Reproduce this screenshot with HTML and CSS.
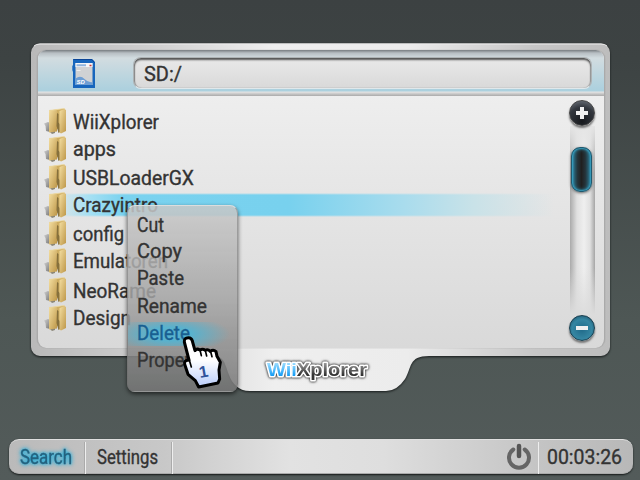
FILE: index.html
```
<!DOCTYPE html>
<html lang="en">
<head>
<meta charset="utf-8">
<title>WiiXplorer</title>
<link rel="stylesheet" href="styles.css">
</head>
<body>
<svg class="defs" width="0" height="0">
  <defs>
    <linearGradient id="gold" x1="0" y1="0" x2="1" y2="1"><stop offset="0" stop-color="#f4deA0"/><stop offset="1" stop-color="#bd9648"/></linearGradient>
    <linearGradient id="steel" x1="0" y1="0" x2="1" y2="1"><stop offset="0" stop-color="#d0d0d0"/><stop offset="1" stop-color="#777"/></linearGradient>
    <symbol id="folder" viewBox="0 0 22 27">
      <path d="M0 15.500l4-1.500 2 1v9l-4-1-.500-5z" fill="url(#steel)"/><path d="M4 22l7-1v4l-3 1z" fill="#8a8678"/>
      <path d="M5 2.500L20.500.500v19L5 23z" fill="#cfae62"/>
      <path d="M5 2.500L13 1.500v22L5 24.500z" fill="url(#gold)"/>
      <path d="M13 5l1.500 1v8.500l1.500 2v7.500l-1.500 1-2-7z" fill="#86703c"/>
      <path d="M15.500 3L20.500 1l1.500 1v21l-5 2.500-1.500-1z" fill="url(#gold)"/>
      <path d="M5 2.500L20.500.500" stroke="#eed9a0" stroke-width=".8"/>
    </symbol>
  </defs>
</svg>
<main class="window">
  <svg class="frame" viewBox="0 0 580 350">
    <defs>
      <linearGradient id="metal" x1="0" y1="0" x2="1" y2="0"><stop offset="0" stop-color="#b9b9b9"/><stop offset=".2" stop-color="#cecece"/><stop offset=".42" stop-color="#efefef"/><stop offset=".65" stop-color="#ececec"/><stop offset=".87" stop-color="#c6c6c6"/><stop offset="1" stop-color="#bdbdbd"/></linearGradient>
    </defs>
    <path d="M9 .5H570a9 9 0 0 1 9 9V304a9 9 0 0 1-9 9H398C377 313 381 325 374 336Q366 348 355 348H219C207 348 201 340 198 332C193 318 193 313 180 313H9a9 9 0 0 1-9-9V9.500a9 9 0 0 1 9-9z" fill="url(#metal)"/>
    <path d="M3 3Q5 1 9 1H570Q574 1 576 3" fill="none" stroke="#ececec"/>
  </svg>
  <section class="panel">
    <header class="address">
      <svg class="sd" viewBox="0 0 24 31">
        <path d="M1 1H20l3 3V30H1V14L.3 12V8L1 7z" fill="#1766bd"/>
        <path d="M1.500 1.500H20l2.500 3" stroke="#0b4597" fill="none"/>
        <path d="M3.500 5H20.500V27H3.500z" fill="#d0d2d4"/><path d="M3.500 5H20.500V9H3.500z" fill="#f5f6f8"/>
        <path d="M3.500 20.500q5-3.500 9 .5t8 3v3h-17z" fill="#6d9ed4"/>
        <path d="M4.500 7.300H14" stroke="#8fb4de" stroke-width="2"/><path d="M17.500 7.500h2" stroke="#d03a3a" stroke-width="1.500"/>
        <path d="M4.500 12.500h4" stroke="#eee" stroke-width="1"/>
        <text x="4.500" y="26" class="sdmark">SD</text>
      </svg>
      <div class="path"><svg class="label" width="60" height="30"><text x="0" y="22" textLength="38" lengthAdjust="spacingAndGlyphs">SD:/</text></svg></div>
    </header>
    <div class="content">
      <ul class="files">
        <li><svg class="folder"><use href="#folder"/></svg><svg class="label" width="130" height="28"><text x="0" y="22" textLength="86" lengthAdjust="spacingAndGlyphs">WiiXplorer</text></svg></li>
        <li><svg class="folder"><use href="#folder"/></svg><svg class="label" width="130" height="28"><text x="0" y="21" textLength="43" lengthAdjust="spacingAndGlyphs">apps</text></svg></li>
        <li><svg class="folder"><use href="#folder"/></svg><svg class="label" width="130" height="28"><text x="0" y="22" textLength="121" lengthAdjust="spacingAndGlyphs">USBLoaderGX</text></svg></li>
        <li class="selected"><svg class="folder"><use href="#folder"/></svg><svg class="label" width="130" height="28"><text x="0" y="21" textLength="85" lengthAdjust="spacingAndGlyphs">Crazyintro</text></svg></li>
        <li><svg class="folder"><use href="#folder"/></svg><svg class="label" width="130" height="28"><text x="0" y="21.500" textLength="51" lengthAdjust="spacingAndGlyphs">config</text></svg></li>
        <li><svg class="folder"><use href="#folder"/></svg><svg class="label" width="130" height="28"><text x="0" y="20.500" textLength="95" lengthAdjust="spacingAndGlyphs">Emulatoren</text></svg></li>
        <li><svg class="folder"><use href="#folder"/></svg><svg class="label" width="130" height="28"><text x="0" y="22" textLength="83" lengthAdjust="spacingAndGlyphs">NeoRame</text></svg></li>
        <li><svg class="folder"><use href="#folder"/></svg><svg class="label" width="130" height="28"><text x="0" y="20.500" textLength="58" lengthAdjust="spacingAndGlyphs">Design</text></svg></li>
      </ul>
      <div class="scroll">
        <div class="knob dark"><svg viewBox="0 0 26 26"><path d="M11 7h4v4h4v4h-4v4h-4v-4H7v-4h4z" fill="#f0f0f0"/></svg></div>
        <div class="track"><div class="thumb"></div></div>
        <div class="knob blue"><svg viewBox="0 0 26 26"><path d="M7 11h12v4H7z" fill="#f0f0f0"/></svg></div>
      </div>
    </div>
  </section>
  <div class="tab">
    <svg class="logo" width="116" height="30">
      <defs>
        <linearGradient id="blue" x1="0" y1="0" x2="0" y2="1"><stop offset=".2" stop-color="#9bdcff"/><stop offset=".8" stop-color="#139cf5"/></linearGradient>
        <linearGradient id="grey" x1="0" y1="0" x2="0" y2="1"><stop offset=".2" stop-color="#999"/><stop offset=".75" stop-color="#333"/></linearGradient>
      </defs>
      <text x="9" y="21" textLength="100" lengthAdjust="spacingAndGlyphs"><tspan fill="url(#blue)">Wii</tspan><tspan fill="url(#grey)">Xplorer</tspan></text>
    </svg>
  </div>
</main>

<nav class="menu">
  <div class="item"><svg class="label" width="90" height="27"><text x="0" y="19" textLength="27" lengthAdjust="spacingAndGlyphs">Cut</text></svg></div>
  <div class="item"><svg class="label" width="90" height="27"><text x="0" y="17.500" textLength="45" lengthAdjust="spacingAndGlyphs">Copy</text></svg></div>
  <div class="item"><svg class="label" width="90" height="27"><text x="0" y="18" textLength="47" lengthAdjust="spacingAndGlyphs">Paste</text></svg></div>
  <div class="item"><svg class="label" width="90" height="27"><text x="0" y="19" textLength="70" lengthAdjust="spacingAndGlyphs">Rename</text></svg></div>
  <div class="item active"><svg class="label" width="90" height="27"><text x="0" y="19" textLength="53" lengthAdjust="spacingAndGlyphs">Delete</text></svg></div>
  <div class="item"><svg class="label" width="90" height="27"><text x="0" y="19" textLength="83" lengthAdjust="spacingAndGlyphs">Properties</text></svg></div>
</nav>

<svg class="cursor" viewBox="0 0 120 165">
  <defs><linearGradient id="hand" x1="0" y1="0" x2="0" y2="1"><stop offset=".45" stop-color="#fff"/><stop offset="1" stop-color="#b9ccfa"/></linearGradient></defs>
  <path d="M13 21Q12 8 25 8Q35 8 37 18L45 47Q50 39 60 45Q68 40 76 46Q83 41 91 49Q100 42 108 50L111 64L121 82L117 105L119 132L114 144L56 156L46 137L24 118L14 88Q12 76 23 76L27 75Z" fill="url(#hand)" stroke="#000" stroke-width="9" stroke-linejoin="round"/>
  <path d="M27 72L34 96M60 45l4 17M76 47l4 16M92 50l4 15" fill="none" stroke="#000" stroke-width="5" stroke-linecap="round"/>
  <text x="60" y="129" transform="rotate(-10 60 129)">1</text>
</svg>

<footer class="taskbar">
  <div class="task search"><svg class="label" width="60" height="30"><text x="0" y="21.500" textLength="52" lengthAdjust="spacingAndGlyphs">Search</text></svg></div>
  <div class="task settings"><svg class="label" width="66" height="30"><text x="0" y="21.500" textLength="61" lengthAdjust="spacingAndGlyphs">Settings</text></svg></div>
  <div class="power"><svg width="28" height="30" viewBox="0 0 28 30"><path d="M8.300 7.500a10 10 0 1 0 11.400 0" fill="none" stroke="#656565" stroke-width="4" stroke-linecap="round"/><path d="M14 4V14" stroke="#555" stroke-width="4.500" stroke-linecap="round"/></svg></div>
  <div class="clock"><svg class="label" width="80" height="30"><text x="0" y="22" textLength="75" lengthAdjust="spacingAndGlyphs">00:03:26</text></svg></div>
</footer>
</body>
</html>
```
FILE: styles.css
```
* { box-sizing: border-box; }
body {
  margin: 0; width: 640px; height: 480px; overflow: hidden; position: relative;
  display: flex; flex-direction: column;
  font-family: Roboto, "Liberation Sans", sans-serif;
  background: linear-gradient(#3c4142 0, #3d4343 60px, #4e5755 320px, #535b5a 100%);
}
svg { display: block; flex: none; }
.defs { position: absolute; }
.label { overflow: visible; font-size: 19.5px; fill: #333; stroke: #333; stroke-width: .35px; }

.window { position: relative; width: 580px; height: 349px; margin: 43px 0 0 31px; display: flex; flex-direction: column; }
.frame { position: absolute; left: 0; top: 0; width: 580px; height: 350px; filter: drop-shadow(0 1px 1px #161a1a); }
.panel {
  position: relative; margin: 7px 6px 0; height: 298px; border-radius: 9px; overflow: hidden;
  border-left: 1px solid #aaa; border-right: 1px solid #aaa;
  background: linear-gradient(#eee 45px, #e3e3e3 60%, #d9d9d9);
  box-shadow: 0 0 1px #888;
}
.address {
  height: 46px; display: flex; padding: 7px 12px 0 34px; gap: 37px;
  background: linear-gradient(#777c80 0, #b7bec3 3px, #d2dce0 8px, #abd0de 41px, #e5e5e5 42px, #c5c5c5 44px, #aaa 46px);
}
.sd { width: 24px; height: 31px; margin-top: 1px; }
.sdmark { font: italic bold 6px "Liberation Sans", sans-serif; fill: #fff; }
.path {
  width: 459px; height: 32px; padding: 1px 0 0 10px; border-radius: 8px;
  background: linear-gradient(#e9e9e9, #d9d9d9);
  border: 1px solid #aeb3b5; border-bottom-color: #e0e8eb;
  box-shadow: inset 0 2px 2px #555, inset 1px 0 1px #999, inset -1px 0 1px #aaa;
}
.content { display: flex; justify-content: space-between; padding: 3px 8px 0 6px; }
.files { list-style: none; margin: 8px 0 0; padding: 0; width: 520px; }
.files li { height: 28.1px; display: flex; gap: 7px; }
.files .folder { width: 22px; height: 27px; margin-top: 1px; }
.files .selected {
  background:
    linear-gradient(#e6e6e6, #e6e6e600 2px, #e6e6e600 22px, #e4e4e4) 0 2px / 100% 24px no-repeat,
    linear-gradient(90deg, transparent 10px, #a6e0f3 45px, #79d2ef 80px, #78d1ee 245px, #a9dced 360px, #c9e2e8 430px, transparent 510px) 0 2px / 100% 24px no-repeat;
}
.scroll { width: 27px; display: flex; flex-direction: column; align-items: center; padding-top: 1px; }
.knob { width: 26px; height: 26px; border-radius: 50%; position: relative; left: -1px; box-shadow: 0 2px 2px #777; }
.knob svg { width: 26px; height: 26px; }
.dark { background: radial-gradient(circle at 50% 85%, #17191d, #33373e 60%, #777d86); border: 1px solid #444; }
.dark svg, .blue svg { margin: -1px; }
.blue { background: radial-gradient(circle at 50% 55%, #206a89, #3586a2 55%, #1d526a 90%); border: 1px solid #183f50; }
.track {
  width: 25px; height: 189px; padding: 21px 2px 0 1px;
  background: linear-gradient(#e5e5e5, #e5e5e500 25%, #dcdcdc00 75%, #dcdcdc), linear-gradient(90deg, #aaa 0, #e0e0e0 7px, #efefef 14px, #e0e0e0 20px, #a5a5a5 25px);
}
.thumb { width: 21px; height: 45px; border-radius: 9px; border: 1px solid #205a70; background: linear-gradient(90deg, #2c6f87, #25343a 30%, #202020 50%, #25343a 70%, #2c6f87); box-shadow: inset 0 0 2px 1px #3aa3c4, inset 0 0 5px #2e91af, 0 1px 3px #666; }
.tab { position: relative; padding: 7px 0 0 227px; }
.logo { overflow: visible; filter: drop-shadow(0 0 1px #333) drop-shadow(0 0 1px #777); }
.logo text { font: bold 19px "Liberation Sans", sans-serif; paint-order: stroke; stroke: #fff; stroke-width: 3px; stroke-linejoin: round; }

.menu {
  position: absolute; left: 127px; top: 205px; width: 111px; height: 187px; padding-top: 7px;
  border-radius: 8px; border: 1px solid rgba(110,110,110,.45); border-top-color: #ddd;
  background: linear-gradient(rgba(200,200,200,.86), rgba(163,163,163,.84) 50%, rgba(119,119,119,.87));
  box-shadow: 0 2px 4px rgba(0,0,0,.6);
}
.item { height: 27px; padding-left: 9px; }
.active { background: radial-gradient(ellipse 60px 19px at 42px 50%, #58b2ce 35%, rgba(88,178,206,0)) 0 1px / 100% 24px no-repeat; }
.active .label { fill: #185f91; stroke: #185f91; }
.cursor { position: absolute; left: 180px; top: 335px; width: 40px; height: 55px; overflow: visible; }
.cursor text { font: bold 49px "Liberation Sans", sans-serif; fill: #31539b; }

.taskbar {
  width: 624px; height: 35px; margin: 47px 0 0 9px; border-radius: 10px; display: flex; padding-top: 2px;
  background: linear-gradient(90deg, #bababa, #c8c8c8 25%, #e2e2e2 45%, #dedede 60%, #c4c4c4 85%, #b8b8b8);
  border-top: 1px solid #dfdfdf; border-bottom: 1px solid #aaa;
  box-shadow: 0 1px 2px #151818;
}
.task { height: 32px; border-right: 1px solid #eee; box-shadow: inset -1px 0 #aaa; }
.search { width: 77px; padding-left: 11px; }
.settings { width: 87px; padding-left: 11px; }
.search .label { fill: #24627f; stroke: #24627f; filter: drop-shadow(0 0 2px #2daad4) drop-shadow(0 0 1px #43b5d9); }
.power { margin-left: auto; width: 34px; height: 32px; border-right: 1px solid #eee; }
.clock { width: 94px; padding-left: 8px; }
```
